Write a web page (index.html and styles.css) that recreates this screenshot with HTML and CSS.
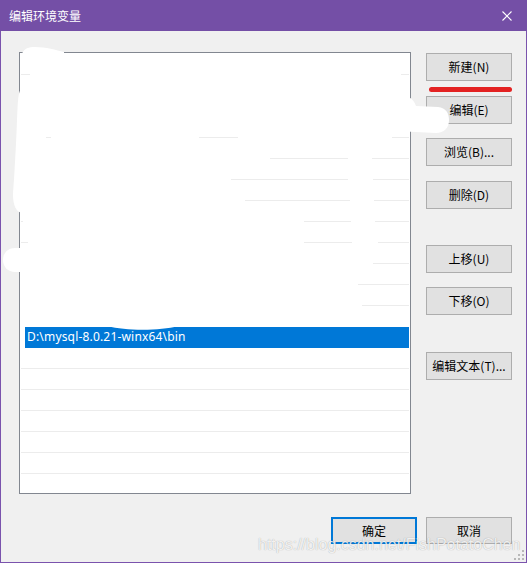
FILE: index.html
```html
<!DOCTYPE html>
<html lang="zh-CN">
<head>
<meta charset="utf-8">
<title>编辑环境变量</title>
<link rel="stylesheet" href="styles.css">
</head>
<body>
<div class="window">
  <div class="titlebar">
    <span class="title">编辑环境变量</span>
    <svg class="close" width="10" height="10" viewBox="0 0 10 10"><path d="M0.5 0.5 L9.5 9.5 M9.5 0.5 L0.5 9.5" stroke="#fff" stroke-width="1.1" fill="none"/></svg>
  </div>
  <div class="content">
    <div class="main">
      <div class="list">
        <div class="row"></div>
        <div class="row"></div>
        <div class="row"></div>
        <div class="row"></div>
        <div class="row"></div>
        <div class="row"></div>
        <div class="row"></div>
        <div class="row"></div>
        <div class="row"></div>
        <div class="row"></div>
        <div class="row"></div>
        <div class="row"></div>
        <div class="row"></div>
        <div class="row selected">D:\mysql-8.0.21-winx64\bin</div>
        <div class="row"></div>
        <div class="row"></div>
        <div class="row"></div>
        <div class="row"></div>
        <div class="row"></div>
        <div class="row"></div>
        <div class="row"></div>
      </div>
      <div class="side">
        <button class="btn">新建(N)</button>
        <button class="btn gap15">编辑(E)</button>
        <button class="btn gap14">浏览(B)...</button>
        <button class="btn gap15">删除(D)</button>
        <button class="btn gap36">上移(U)</button>
        <button class="btn gap14">下移(O)</button>
        <button class="btn gap37">编辑文本(T)...</button>
      </div>
    </div>
    <div class="footer">
      <button class="btn small default">确定</button>
      <button class="btn small">取消</button>
    </div>
  </div>

  <svg class="scribble" width="527" height="563" viewBox="0 0 527 563">
    <g fill="#fff">
      <rect x="30" y="74" width="371" height="1"/>
      <rect x="21" y="95" width="388" height="1"/>
      <rect x="21" y="116" width="388" height="1"/>
      <rect x="21" y="137" width="25" height="1"/>
      <rect x="51" y="137" width="148" height="1"/>
      <rect x="238" y="137" width="154" height="1"/>
      <rect x="21" y="158" width="249" height="1"/>
      <rect x="348" y="158" width="24" height="1"/>
      <rect x="21" y="179" width="210" height="1"/>
      <rect x="348" y="179" width="25" height="1"/>
      <rect x="21" y="200" width="224" height="1"/>
      <rect x="350" y="200" width="24" height="1"/>
      <rect x="23" y="221" width="281" height="1"/>
      <rect x="351" y="221" width="24" height="1"/>
      <rect x="28" y="242" width="276" height="1"/>
      <rect x="352" y="242" width="26" height="1"/>
      <rect x="21" y="263" width="352" height="1"/>
      <rect x="21" y="284" width="337" height="1"/>
      <rect x="21" y="305" width="341" height="1"/>
      <rect x="21" y="326" width="388" height="1"/>
      <path d="M22 54 C24 48 29 47 35 47 C46 47 56 50 64 52 L64 54 Z"/>
      <path d="M22 89 C18 90 18 100 17 120 C16 150 14 180 13 195 C13 205 16 212 22 213 Z"/>
      <path d="M24 248 L15 248 C8 248 3 253 3 260 C3 267 8 272 15 272 L24 272 Z"/>
      <path d="M396 95 C407 94 413 98 416 106 L438 107 C446 108 449 113 449 120 C449 128 444 133 436 133 L396 131 Z"/>
      <path d="M108 326 C125 331 160 331 178 326 Z"/>
    </g>
  </svg>
  <div class="redmark"></div>
  <div class="watermark">https://blog.csdn.net/FishPotatoChen</div>
  <svg class="grip" width="10" height="10" viewBox="0 0 10 10">
    <g fill="#b8b8b8">
      <rect x="8" y="0" width="2" height="2"/>
      <rect x="4" y="4" width="2" height="2"/>
      <rect x="8" y="4" width="2" height="2"/>
      <rect x="0" y="8" width="2" height="2"/>
      <rect x="4" y="8" width="2" height="2"/>
      <rect x="8" y="8" width="2" height="2"/>
    </g>
  </svg>
</div>
</body>
</html>
```
FILE: styles.css
```css
* { box-sizing: border-box; }
html, body { margin: 0; padding: 0; }
body {
  width: 527px;
  height: 563px;
  font-family: "Noto Sans", "Noto Sans CJK SC", sans-serif;
  font-size: 12px;
  color: #000;
  overflow: hidden;
}
.window {
  position: relative;
  width: 527px;
  height: 563px;
  display: flex;
  flex-direction: column;
  background: #f0f0f0;
}
.titlebar {
  height: 31px;
  flex: 0 0 31px;
  background: #744fa6;
  display: flex;
  align-items: center;
  justify-content: space-between;
  padding: 0 15px 0 9px;
}
.title {
  color: #fff;
  font-family: "Noto Sans CJK SC", sans-serif;
  font-size: 12px;
  line-height: 16px;
}
.close { display: block; }
.content {
  flex: 1;
  border: 1px solid #7a53ad;
  border-top: none;
  padding: 21px 14px 0 18px;
}
.main {
  display: flex;
  gap: 15px;
}
.list {
  width: 392px;
  height: 442px;
  background: #fff;
  border: 1px solid #828790;
  padding: 1px 1px 0 1px;
  overflow: hidden;
}
.row {
  height: 21px;
  border-bottom: 1px solid #ececec;
}
.row.selected {
  margin-left: 4px;
  background: #0078d7;
  color: #fff;
  padding-left: 2px;
  line-height: 20px;
  font-family: "Noto Sans", sans-serif;
  font-size: 12px;
  letter-spacing: 0.18px;
  border-bottom-color: #0078d7;
}
.side {
  width: 86px;
  padding-top: 1px;
  display: flex;
  flex-direction: column;
}
.btn {
  width: 86px;
  height: 28px;
  margin: 0;
  padding: 0;
  background: #e1e1e1;
  border: 1px solid #adadad;
  font-family: "Noto Sans CJK SC", sans-serif;
  font-size: 12px;
  color: #000;
  line-height: 16px;
}
.gap14 { margin-top: 14px; }
.gap15 { margin-top: 15px; }
.gap36 { margin-top: 36px; }
.gap37 { margin-top: 37px; }
.footer {
  display: flex;
  justify-content: flex-end;
  gap: 9px;
  margin-top: 23px;
}
.btn.small { height: 27px; }
.btn.default { border: 2px solid #0078d7; }
.scribble {
  position: absolute;
  left: 0;
  top: 0;
  pointer-events: none;
}
.redmark {
  position: absolute;
  left: 429px;
  top: 87px;
  width: 83px;
  height: 5px;
  border-radius: 3px;
  background: #e32222;
}
.watermark {
  position: absolute;
  left: 258px;
  top: 536px;
  font-family: "Liberation Sans", Arial, sans-serif;
  font-size: 16px;
  line-height: 18px;
  color: rgba(255, 255, 255, 0.85);
  text-shadow: 0 0 1px rgba(0, 0, 0, 0.35);
  white-space: nowrap;
  pointer-events: none;
}
.grip {
  position: absolute;
  left: 514px;
  top: 550px;
}
```
